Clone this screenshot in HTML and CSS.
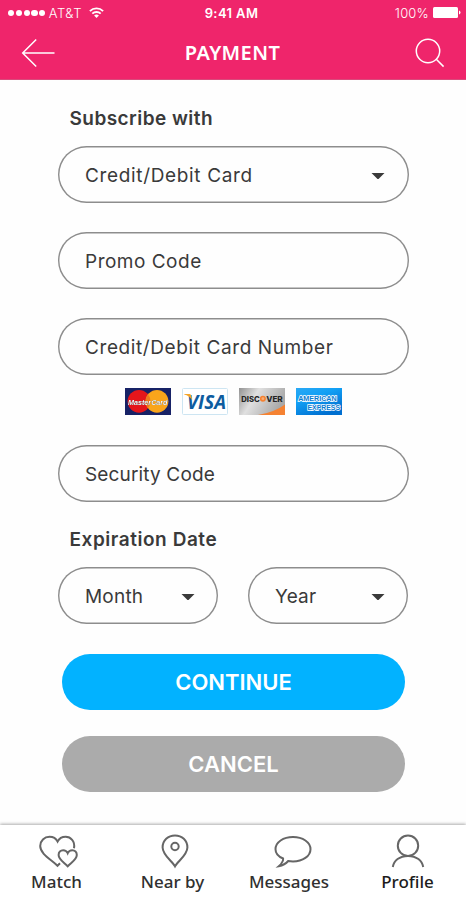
FILE: index.html
```html
<!DOCTYPE html>
<html lang="en">
<head>
<meta charset="utf-8">
<title>Payment</title>
<link rel="stylesheet" href="styles.css">
</head>
<body>
<div class="screen">
  <header class="header">
    <div class="status">
      <div class="carrier">
        <span class="dots"><i></i><i></i><i></i><i></i><i></i></span>
        <span class="network">AT&amp;T</span>
        <svg class="wifi" width="15" height="12" viewBox="0 0 15 12" fill="none" stroke="#fff" stroke-width="1.9"><path d="M.9 4.1a9.4 9.4 0 0 1 13.2 0"/><path d="M3.3 6.7a5.9 5.9 0 0 1 8.4 0"/><path d="M7.5 10.9 5.1 8.6a3.5 3.5 0 0 1 4.8 0z" fill="#fff" stroke="none"/></svg>
      </div>
      <span class="time">9:41 AM</span>
      <div class="power">
        <span class="percent">100%</span>
        <svg width="28" height="12" viewBox="0 0 28 12"><rect width="25" height="11" rx="1.5" fill="#fff"/><path d="M26 3.5q1.5.6 1.5 2t-1.5 2z" fill="#fff"/></svg>
      </div>
    </div>
    <div class="titlebar">
      <svg width="34" height="30" viewBox="0 0 34 30" fill="none" stroke="#fff" stroke-width="1.5"><path d="M15.2 1.5 1.7 15l13.5 13.5M1.7 15h31.8"/></svg>
      <h1>PAYMENT</h1>
      <svg width="30" height="30" viewBox="0 0 30 30" fill="none" stroke="#fff" stroke-width="1.5"><circle cx="13" cy="13" r="11.7"/><path d="m21.3 21.3 7.3 7.3"/></svg>
    </div>
  </header>

  <main class="form">
    <h2 class="label label-subscribe">Subscribe with</h2>
    <div class="field field-method"><span class="t-method">Credit/Debit Card</span><svg class="caret" width="14" height="8" viewBox="0 0 14 8"><path d="M.5 1h13L8 6.6q-1 1-2 0z" fill="#3a3a3a"/></svg></div>
    <div class="field field-promo"><span class="t-promo">Promo Code</span></div>
    <div class="field field-number"><span class="t-number">Credit/Debit Card Number</span></div>
    <div class="cards">
      <svg width="46" height="27" viewBox="0 0 46 27"><rect width="46" height="27" fill="#172266"/><circle cx="14" cy="13.3" r="11.4" fill="#e5161b"/><circle cx="32" cy="13.3" r="11.4" fill="#f9a51b"/><path d="M23 6.3a11.4 11.4 0 0 1 0 14 11.4 11.4 0 0 1 0-14z" fill="#ef7a1c"/><text x="3" y="16.5" class="brand-mc" textLength="39.5" lengthAdjust="spacingAndGlyphs">MasterCard</text></svg>
      <svg width="46" height="27" viewBox="0 0 46 27"><rect x=".5" y=".5" width="45" height="26" rx="1" fill="#fff" stroke="#cde5f2"/><text x="5" y="20.8" class="brand-visa" textLength="39" lengthAdjust="spacingAndGlyphs">VISA</text><path d="M2.2 6h5.4q1.3.1 1.6 1.7l1 4.6Q7.4 7.5 2.2 6.5z" fill="#f4a428"/></svg>
      <svg width="46" height="27" viewBox="0 0 46 27"><defs><linearGradient id="silver" x1="0" y1="0" x2="1" y2=".35"><stop stop-color="#929292"/><stop offset=".4" stop-color="#e0e0e0"/><stop offset="1" stop-color="#a9a9a9"/></linearGradient></defs><rect width="46" height="27" fill="url(#silver)"/><path d="M46 16.5V27H19q16-2.5 27-10.5z" fill="#f58232"/><text x="2.3" y="13.5" class="brand-disc" textLength="18.5" lengthAdjust="spacingAndGlyphs">DISC</text><circle cx="23.9" cy="10.7" r="3" fill="#f58232"/><circle cx="23.9" cy="10.7" r="1.4" fill="#f8ad75"/><text x="27.2" y="13.5" class="brand-disc" textLength="16.5" lengthAdjust="spacingAndGlyphs">VER</text></svg>
      <svg width="46" height="27" viewBox="0 0 46 27"><defs><linearGradient id="amex" x1="0" y1="0" x2=".6" y2="1"><stop stop-color="#2aa9f5"/><stop offset=".4" stop-color="#12a0f5"/><stop offset="1" stop-color="#006fd0"/></linearGradient></defs><rect width="46" height="27" fill="url(#amex)"/><text x="2.2" y="12.5" class="brand-amex" textLength="38.5" lengthAdjust="spacingAndGlyphs">AMERICAN</text><text x="11.5" y="21.5" class="brand-amex" textLength="32.5" lengthAdjust="spacingAndGlyphs">EXPRESS</text></svg>
    </div>
    <div class="field field-security"><span class="t-security">Security Code</span></div>
    <h2 class="label label-expiry">Expiration Date</h2>
    <div class="expiry">
      <div class="field"><span class="t-month">Month</span><svg class="caret" width="14" height="8" viewBox="0 0 14 8"><path d="M.5 1h13L8 6.6q-1 1-2 0z" fill="#3a3a3a"/></svg></div>
      <div class="field"><span class="t-year">Year</span><svg class="caret" width="14" height="8" viewBox="0 0 14 8"><path d="M.5 1h13L8 6.6q-1 1-2 0z" fill="#3a3a3a"/></svg></div>
    </div>
    <button class="button button-continue">CONTINUE</button>
    <button class="button button-cancel">CANCEL</button>
  </main>

  <nav class="tabs">
    <a class="tab tab-match"><svg width="40" height="36" viewBox="0 0 40 36" fill="none" stroke="#666" stroke-width="2"><path d="M36 14.2C37.3 7 32.5 2.8 27.7 2.8c-4 0-6.8 2.2-8.1 4.8C18.3 5 15.5 2.8 11.5 2.8c-5.2 0-9.3 4-9.3 9.2 0 8.1 11.5 13.8 17.3 19.8l2.5-2.6"/><path d="M29.7 32.3c-2.9-3.4-9.1-6.5-9.1-11.3 0-2.9 2-4.8 4.5-4.8 2.2 0 3.8 1.2 4.6 3 .8-1.8 2.4-3 4.6-3 2.5 0 4.5 1.9 4.5 4.8 0 4.8-6.2 7.9-9.1 11.3z"/></svg><span>Match</span></a>
    <a class="tab tab-near"><svg width="30" height="36" viewBox="0 0 30 36" fill="none" stroke="#666" stroke-width="2"><path d="M15 32.3C12.5 27.5 2.6 21 2.6 13.4 2.6 6.3 8 1.5 15 1.5s12.4 4.8 12.4 11.9C27.4 21 17.5 27.5 15 32.3z"/><circle cx="15" cy="12.5" r="3.7"/></svg><span>Near by</span></a>
    <a class="tab tab-messages"><svg width="40" height="36" viewBox="0 0 40 36" fill="none" stroke="#666" stroke-width="2"><path d="M5.8 32.2c2.2-2 4.7-5 4.3-7.7C5.3 22.5 2.5 19.4 2.5 15.2 2.5 8.3 10.3 3 20 3s17.5 5.3 17.5 12.2S29.7 27.4 20 27.4c-1.7 0-3.3-.1-4.8-.4-2.3 2.7-5.2 4.4-9.4 5.2z"/></svg><span>Messages</span></a>
    <a class="tab tab-profile"><svg width="40" height="36" viewBox="0 0 40 36" fill="none" stroke="#666" stroke-width="2"><circle cx="20" cy="11.7" r="10.2"/><path d="M4.8 33C5.8 26.6 11.5 21.9 20 21.9S34.2 26.6 35.2 33"/></svg><span>Profile</span></a>
  </nav>
</div>
</body>
</html>
```
FILE: styles.css
```css
* { box-sizing: border-box; }
body { margin: 0; background: #fefefe; color: #3a3a3a; font-family: Inter, "Liberation Sans", sans-serif; }
svg { display: block; flex: none; }
.screen { width: 466px; height: 900px; display: flex; flex-direction: column; overflow: hidden; }

.header { height: 80px; background: #ef256b; color: #fff; border-bottom: 1px solid #d94b7c; }
.status { height: 26px; display: grid; grid-template-columns: 1fr auto 1fr; align-items: center; padding: 0 5px 0 8px; font-size: 13px; }
.carrier { display: flex; align-items: center; }
.dots { display: flex; gap: 1.6px; margin-right: 3.5px; }
.dots i { width: 6.2px; height: 6.2px; border-radius: 50%; background: #fff; }
.network { font-weight: 300; letter-spacing: 0.5px; width: 40px; }
.time { font-weight: 600; letter-spacing: 0.4px; margin: 0 3px 0 -3px; }
.power { display: flex; align-items: center; justify-content: flex-end; gap: 4px; }
.percent { font-weight: 300; letter-spacing: 0.2px; }
.titlebar { height: 54px; display: flex; align-items: center; justify-content: space-between; padding: 0 21px 0 21px; }
.titlebar h1 { margin: 0 5px 0 0; font: 600 20px/28px "Noto Sans", sans-serif; letter-spacing: 0.4px; }

.form { flex: none; height: 745px; padding: 26px 57px 0 58px; display: flex; flex-direction: column; }
.label { margin: 0 0 0 11.5px; font-size: 19px; line-height: 26px; font-weight: 600; white-space: nowrap; }
.label-subscribe { letter-spacing: 0.45px; }
.field { width: 351px; height: 57px; flex: none; box-shadow: inset 0 0 0 1.4px #8d8d8d; border-radius: 29px; display: flex; align-items: center; justify-content: space-between; padding: 2px 24px 0 27px; font-size: 19px; font-weight: 400; white-space: nowrap; }
.field-method { margin-top: 14px; }
.field-promo { margin-top: 29px; }
.field-number { margin-top: 29px; }
.t-method { letter-spacing: 0.65px; }
.t-promo { letter-spacing: 0.5px; }
.t-number { letter-spacing: 0.6px; }
.t-security { letter-spacing: 0.15px; }
.t-month, .t-year { letter-spacing: 0.2px; }
.cards { display: flex; gap: 11px; margin: 13px 0 0 67px; }
.field-security { margin-top: 30px; }
.label-expiry { margin-top: 25px; letter-spacing: 0.55px; }
.expiry { display: flex; gap: 30px; margin-top: 14px; }
.expiry .field { width: 160px; padding-right: 23px; }
.button { width: 343px; height: 56px; flex: none; margin: 0 0 0 4px; padding: 0; border: 0; border-radius: 28px; color: #fff; font: 600 22px/56px Inter, sans-serif; }
.button-continue { margin-top: 30px; background: #02b2ff; }
.button-cancel { margin-top: 26px; background: #ababab; }

.brand-mc { font: italic 700 7.6px "Liberation Sans", sans-serif; fill: #fff; filter: drop-shadow(0.5px 0.6px 0.3px #222); }
.brand-visa { font: italic 700 20px "Open Sans", sans-serif; fill: #0d5c9f; }
.brand-disc { font: 800 7.5px Inter, sans-serif; fill: #252525; }
.brand-amex { font: 700 7.4px "Liberation Sans", sans-serif; fill: #087bd1; stroke: #fff; stroke-width: 1.6px; paint-order: stroke; }

.tabs { height: 75px; flex: none; display: flex; background: #fff; box-shadow: 0 -1px 3px #aaa; }
.tab { display: flex; flex-direction: column; align-items: center; padding-top: 9px; width: 116px; font: 500 17px/24px "Noto Sans", sans-serif; color: #303030; white-space: nowrap; }
.tab-match { width: 113px; }
.tab-match svg { margin-left: 2px; }
.tab-near { width: 119px; }
.tab-near svg { margin-left: 4px; }
.tab-messages { width: 114px; }
.tab-messages svg { margin-left: 7px; }
.tab-profile { width: 120px; padding-left: 3px; }
.tab-profile span { color: #1c1c1c; }
```
